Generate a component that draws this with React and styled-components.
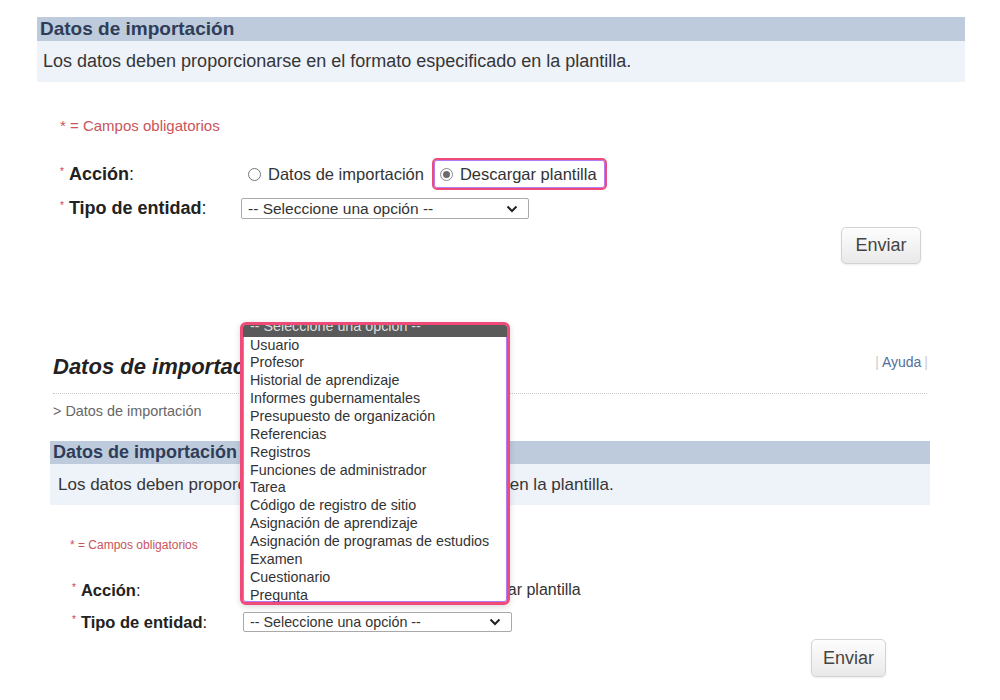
import React from "react";
import styled, { createGlobalStyle, css } from "styled-components";

const GlobalStyle = createGlobalStyle`
  body {
    margin: 0;
    background: #fff;
    font-family: "Liberation Sans", Arial, sans-serif;
  }
`;

const opciones = [
  "Usuario",
  "Profesor",
  "Historial de aprendizaje",
  "Informes gubernamentales",
  "Presupuesto de organización",
  "Referencias",
  "Registros",
  "Funciones de administrador",
  "Tarea",
  "Código de registro de sitio",
  "Asignación de aprendizaje",
  "Asignación de programas de estudios",
  "Examen",
  "Cuestionario",
  "Pregunta",
];

const Root = styled.div`
  position: relative;
  width: 1000px;
  height: 700px;
  overflow: hidden;
  padding-top: 17px;
  box-sizing: border-box;
`;

const Panel = styled.div`
  margin-left: ${(p) => p.left}px;
  width: ${(p) => p.width}px;
`;

const Banner = styled.div`
  background: #bdcbdc;
  color: #2f3d58;
  font-weight: bold;
  height: ${(p) => (p.small ? 23 : 24)}px;
  line-height: ${(p) => (p.small ? 23 : 24)}px;
  font-size: ${(p) => (p.small ? 18 : 19)}px;
  padding-left: 3px;
  margin-top: ${(p) => p.top || 0}px;
  white-space: nowrap;
`;

const Desc = styled.div`
  background: #eef2f9;
  color: #363636;
  height: 41px;
  line-height: 41px;
  font-size: ${(p) => (p.small ? 17 : 18)}px;
  padding-left: ${(p) => (p.small ? 8 : 6)}px;
  white-space: nowrap;
`;

const Note = styled.div`
  color: #c9545a;
  font-size: ${(p) => (p.small ? 12 : 15)}px;
  line-height: 16px;
  margin-top: ${(p) => p.top}px;
  padding-left: ${(p) => p.indent}px;
`;

const Row = styled.div`
  display: grid;
  grid-template-columns: ${(p) => p.labelWidth}px 1fr;
  align-items: center;
  height: ${(p) => p.height}px;
  margin-top: ${(p) => p.top}px;
  padding-left: ${(p) => p.indent}px;
`;

const Label = styled.div`
  font-size: ${(p) => (p.small ? 16.5 : 18)}px;
  color: #222;
  white-space: nowrap;
  b {
    font-weight: bold;
  }
`;

const Star = styled.span`
  color: #d04050;
  font-size: 10px;
  vertical-align: 5px;
  margin-right: 5px;
`;

const Radios = styled.div`
  display: flex;
  align-items: center;
  gap: ${(p) => (p.small ? 6 : 8)}px;
`;

const RadioOpt = styled.label`
  display: flex;
  align-items: center;
  gap: ${(p) => (p.small ? 5 : 7)}px;
  font-size: ${(p) => (p.small ? 16 : 16.5)}px;
  color: #333;
  height: 28px;
  white-space: nowrap;
  padding: 0 ${(p) => (p.highlight ? 8 : 0)}px 0 ${(p) => (p.highlight ? 6 : 7)}px;
  border-radius: 5px;
  ${(p) =>
    p.highlight &&
    css`
      border: 2px solid #f04b78;
      box-shadow: inset 0 0 0 1px #b27cf0;
    `}
`;

const Dot = styled.span`
  width: ${(p) => (p.small ? 12 : 13)}px;
  height: ${(p) => (p.small ? 12 : 13)}px;
  flex: none;
  border-radius: 50%;
  border: 1px solid #777;
  background: #fff;
  box-sizing: border-box;
  position: relative;
  ${(p) =>
    p.checked &&
    css`
      border-color: #8a8a8a;
      &::after {
        content: "";
        position: absolute;
        inset: 2px;
        border-radius: 50%;
        background: #6b6b6b;
      }
    `}
`;

const Select = styled.div`
  width: ${(p) => p.width}px;
  height: ${(p) => p.height}px;
  border: 1px solid #a9a9a9;
  border-radius: 2px;
  box-sizing: border-box;
  display: flex;
  align-items: center;
  justify-content: space-between;
  padding: 0 10px 0 6px;
  font-size: ${(p) => (p.small ? 14.3 : 15.5)}px;
  color: #333;
  background: #fff;
  white-space: nowrap;
`;

const ButtonRow = styled.div`
  display: flex;
  justify-content: flex-end;
  margin-top: ${(p) => p.top}px;
  padding-right: ${(p) => p.right}px;
`;

const Enviar = styled.button`
  width: ${(p) => p.width}px;
  height: ${(p) => p.height}px;
  border: 1px solid #d3d3d3;
  border-radius: 5px;
  background: linear-gradient(#fdfdfd, #e9e9e9);
  color: #444;
  font-family: inherit;
  font-size: 18px;
  box-shadow: 0 1px 2px rgba(0, 0, 0, 0.08);
`;

const TitleRow = styled.div`
  display: flex;
  justify-content: space-between;
  align-items: center;
  padding: 0 2px 0 3px;
  height: 26px;
  margin-top: ${(p) => p.top}px;
`;

const BigTitle = styled.h1`
  margin: 0;
  font-size: 22px;
  font-style: italic;
  font-weight: bold;
  color: #222;
  white-space: nowrap;
`;

const Help = styled.div`
  font-size: 14px;
  color: #ccc;
  margin-top: -10px;
  a {
    color: #52709c;
    text-decoration: none;
    margin: 0 3px;
  }
`;

const Dotted = styled.div`
  margin: 13px 3px 0 3px;
  border-top: 1px dotted #c8c8c8;
`;

const Crumb = styled.div`
  font-size: 14.4px;
  color: #666;
  line-height: 16px;
  margin-top: 9px;
  padding-left: 3px;
`;

const DropList = styled.div`
  position: absolute;
  left: 240px;
  top: 322px;
  width: 270px;
  height: 283px;
  box-sizing: border-box;
  border: 3px solid #f04b78;
  border-radius: 6px;
  box-shadow: inset 0 0 0 1px #b27cf0, 0 2px 6px rgba(0, 0, 0, 0.15);
  background: #fff;
  overflow: hidden;
  padding: 0 4px;
`;

const Option = styled.div`
  font-size: 14.3px;
  line-height: 17.86px;
  height: 17.86px;
  padding-left: 3px;
  color: #333;
  white-space: nowrap;
  ${(p) =>
    p.selected &&
    css`
      background: #5a5a5a;
      color: #ddd;
      margin: -4px -4px 0;
      padding-left: 7px;
      height: 15.5px;
      line-height: 11px;
      overflow: hidden;
    `}
`;

const Chevron = () => (
  <svg width="12" height="8" viewBox="0 0 12 8">
    <path d="M1.5 1.5 L6 6 L10.5 1.5" fill="none" stroke="#222" strokeWidth="2" />
  </svg>
);

const FormBlock = ({ small }) => {
  const indent = small ? 22 : 23;
  const labelWidth = small ? 171 : 181;
  return (
    <>
      <Note small={small} top={small ? 32 : 36} indent={small ? 20 : 23}>
        * = Campos obligatorios
      </Note>
      <Row top={small ? 23 : 24} height={small ? 26 : 32} indent={indent} labelWidth={labelWidth}>
        <Label small={small}>
          <Star>*</Star>
          <b>Acción</b>:
        </Label>
        <Radios small={small}>
          <RadioOpt small={small}>
            <Dot small={small} />
            Datos de importación
          </RadioOpt>
          <RadioOpt small={small} highlight={!small}>
            <Dot small={small} checked />
            Descargar plantilla
          </RadioOpt>
        </Radios>
      </Row>
      <Row top={small ? 10 : 8} height={small ? 20 : 21} indent={indent} labelWidth={labelWidth}>
        <Label small={small}>
          <Star>*</Star>
          <b>Tipo de entidad</b>:
        </Label>
        <Select small={small} width={small ? 269 : 288} height={small ? 20 : 21}>
          -- Seleccione una opción --
          <Chevron />
        </Select>
      </Row>
      <ButtonRow top={small ? 7 : 8} right={44}>
        <Enviar width={small ? 75 : 80} height={small ? 38 : 37}>
          Enviar
        </Enviar>
      </ButtonRow>
    </>
  );
};

export default function App() {
  return (
    <>
      <GlobalStyle />
      <Root>
        <Panel left={37} width={928}>
          <Banner>Datos de importación</Banner>
          <Desc>Los datos deben proporcionarse en el formato especificado en la plantilla.</Desc>
          <FormBlock />
        </Panel>

        <Panel left={50} width={880}>
          <TitleRow top={90}>
            <BigTitle>Datos de importación</BigTitle>
            <Help>
              |<a href="#ayuda">Ayuda</a>|
            </Help>
          </TitleRow>
          <Dotted />
          <Crumb>&gt; Datos de importación</Crumb>
          <Banner small top={22}>
            Datos de importación
          </Banner>
          <Desc small>Los datos deben proporcionarse en el formato especificado en la plantilla.</Desc>
          <FormBlock small />
        </Panel>

        <DropList>
          <Option selected>-- Seleccione una opción --</Option>
          {opciones.map((o) => (
            <Option key={o}>{o}</Option>
          ))}
        </DropList>
      </Root>
    </>
  );
}
